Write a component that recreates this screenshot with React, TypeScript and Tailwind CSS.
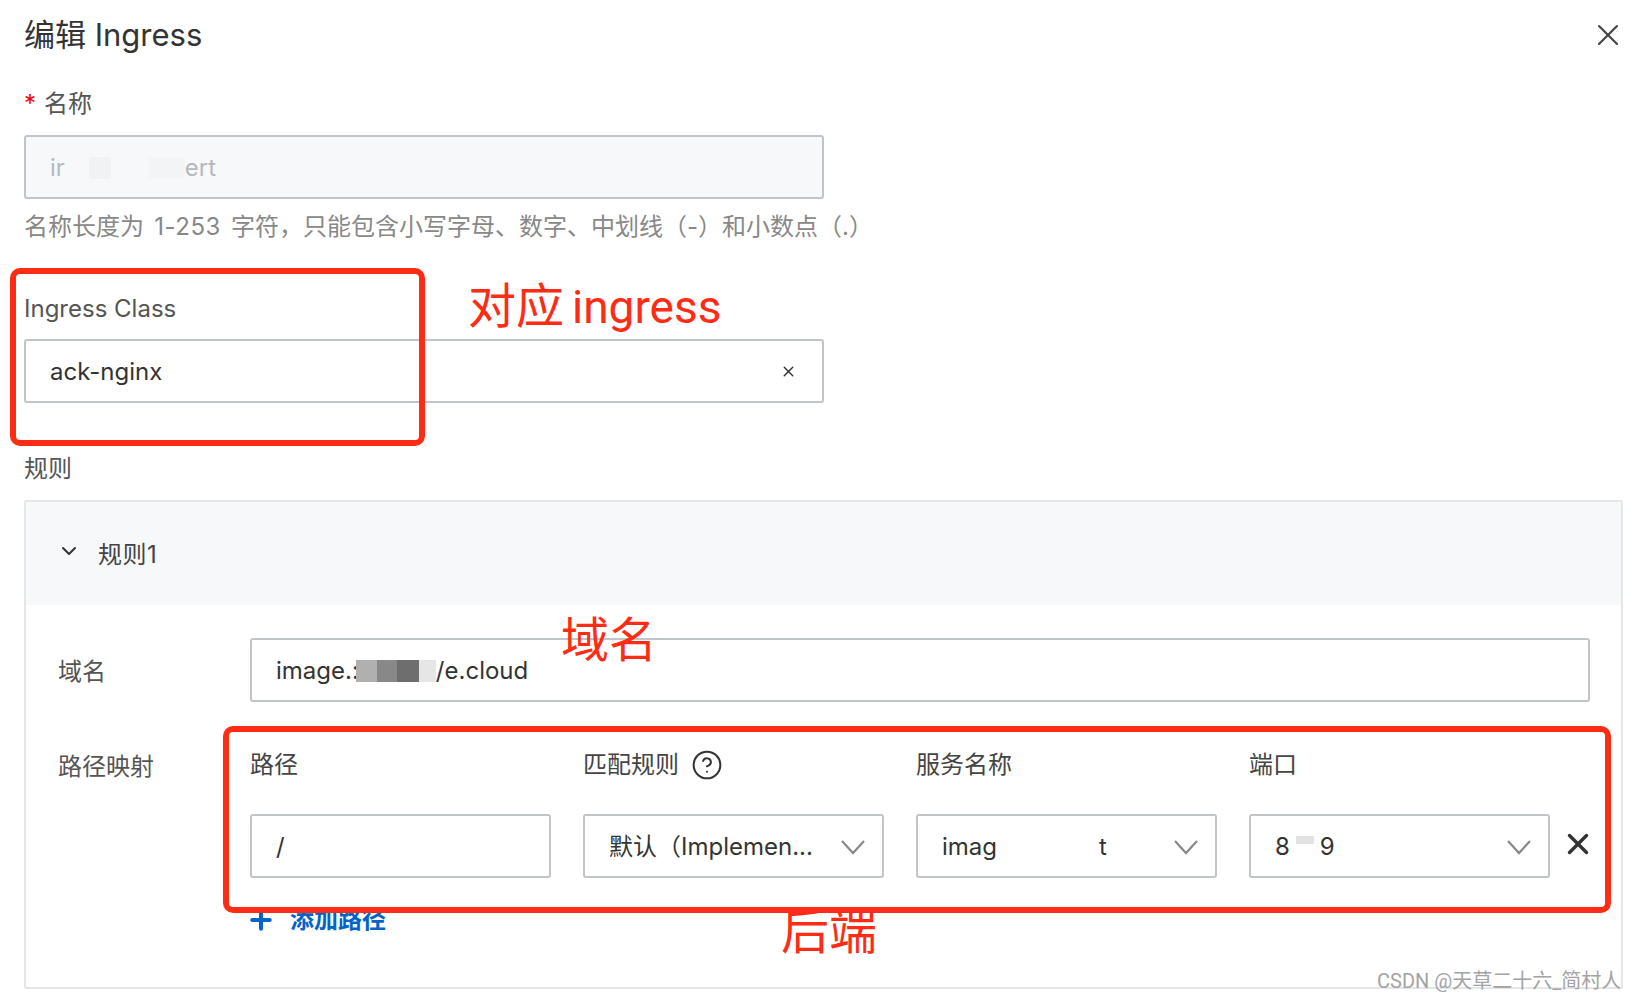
import { ChevronDown, CircleHelp, Plus, X } from 'lucide-react';

const inputBox = 'flex h-[64px] items-center rounded-[3px] border-2 border-[#c1c4c9] bg-white pl-[24px] pt-[2px] text-[24px] text-[#333]';

const SelectBox = ({ children }: { children: React.ReactNode }) => (
  <div className={`${inputBox} w-[301px] justify-between pr-[17px]`}>
    <div className="flex items-center whitespace-nowrap">{children}</div>
    <svg width="24" height="16" viewBox="0 0 24 16" fill="none" stroke="#888" strokeWidth="2.2" className="shrink-0">
      <path d="M1 2l11 12L23 2" />
    </svg>
  </div>
);

const ColLabel = ({ children }: { children: React.ReactNode }) => (
  <div className="flex h-[46px] w-[301px] items-center pt-[2px] text-[24px] text-[#444]">{children}</div>
);

const App = () => {
  return (
    <div className="relative h-[1000px] w-[1634px] overflow-hidden bg-white pl-[24px] font-['Inter','Noto_Sans_CJK_SC',sans-serif]">
      {/* header */}
      <div className="flex h-[70px] items-center justify-between pr-[8px]">
        <h1 className="text-[31px] text-[#333]">编辑 Ingress</h1>
        <X size={36} strokeWidth={1.4} className="text-[#444]" />
      </div>

      {/* name */}
      <div className="flex h-[65px] items-center pt-[2px] text-[24px] text-[#555]">
        <span className="mr-[8px] text-[#e00]">*</span>
        名称
      </div>
      <div className="flex h-[64px] w-[800px] items-center rounded-[3px] border-2 border-[#c1c4c9] bg-[#f7f8fa] pl-[24px] pt-[2px] text-[24px] text-[#b5b8bd]">
        ir
        <span className="ml-[24px] h-[22px] w-[22px] bg-[#f1f2f4]" />
        <span className="ml-[38px] h-[22px] w-[36px] bg-[#f3f4f6]" />
        ert
      </div>
      <p className="flex h-[54px] items-center pt-[1px] text-[24px] text-[#888]">
        名称长度为<span className="mx-[3px] whitespace-pre tracking-[0.5px]"> 1-253 </span>字符，只能包含小写字母、数字、中划线（-）和小数点（.）
      </p>

      {/* ingress class */}
      <div className="mt-[32px] flex h-[46px] items-center pt-[2px] text-[24px] text-[#555]">Ingress Class</div>
      <div className={`${inputBox} mt-[8px] w-[800px] justify-between pr-[25px]`}>
        ack-nginx
        <X size={17} strokeWidth={2} className="mt-[-2px] text-[#333]" />
      </div>

      {/* rules */}
      <div className="mt-[42px] flex h-[46px] items-center pt-[2px] text-[24px] text-[#555]">规则</div>
      <div className="mt-[9px] h-[489px] w-[1599px] rounded-[2px] border-2 border-[#e5e6e8]">
        <div className="flex h-[103px] items-center bg-[#f7f8fa] pl-[31px] pt-[2px] text-[24px] tracking-[0.5px] text-[#444]">
          <ChevronDown size={24} strokeWidth={2} className="mr-[17px] mt-[-8px] text-[#333]" />
          规则1
        </div>
        <div className="pl-[32px] pr-[31px] pt-[33px]">
          <div className="flex items-center">
            <div className="w-[192px] pt-[3px] text-[24px] text-[#555]">域名</div>
            <div className={`${inputBox} flex-1 whitespace-nowrap`}>
              image.:
              <span className="ml-[-3px] flex h-[22px]">
                <span className="h-full w-[21px] bg-[#b0b0b0]" />
                <span className="h-full w-[20px] bg-[#888]" />
                <span className="h-full w-[22px] bg-[#6e6e6e]" />
                <span className="h-full w-[17px] bg-[#e6e6e6]" />
              </span>
              /e.cloud
            </div>
          </div>
          <div className="mt-[39px] flex">
            <div className="flex h-[46px] w-[192px] items-center pt-[6px] text-[24px] text-[#555]">路径映射</div>
            <div>
              <div className="flex gap-[32px]">
                <ColLabel>路径</ColLabel>
                <ColLabel>
                  匹配规则
                  <CircleHelp size={32} strokeWidth={1.5} className="ml-[12px] text-[#333]" />
                </ColLabel>
                <ColLabel>服务名称</ColLabel>
                <ColLabel>端口</ColLabel>
              </div>
              <div className="mt-[27px] flex items-center gap-[32px]">
                <div className={`${inputBox} w-[301px]`}>/</div>
                <SelectBox>默认（Implemen...</SelectBox>
                <SelectBox>
                  imag
                  <span className="ml-[102px]">t</span>
                </SelectBox>
                <div className="relative">
                  <SelectBox>
                    8
                    <span className="ml-[6px] mr-[6px] mt-[-14px] h-[8px] w-[18px] bg-[#e2e2e2]" />
                    9
                  </SelectBox>
                  <X size={34} strokeWidth={2.4} className="absolute left-[312px] top-[13px] text-[#333]" />
                </div>
              </div>
              <div className="mt-[21px] flex h-[42px] items-center text-[24px] font-semibold text-[#0064c8]">
                <Plus size={30} strokeWidth={3.2} className="ml-[-4px] mr-[14px]" />
                添加路径
              </div>
            </div>
          </div>
        </div>
      </div>

      {/* annotations over the form */}
      <div className="absolute left-[10px] top-[268px] h-[178px] w-[415px] rounded-[10px] border-[6px] border-[#ff2c15]" />
      <div className="absolute left-[223px] top-[726px] h-[187px] w-[1388px] rounded-[10px] border-[6px] border-[#ff2c15]" />
      <div className="absolute left-[468px] top-[272px] flex items-baseline whitespace-nowrap font-['Roboto','Noto_Sans_CJK_SC',sans-serif] text-[48px] leading-[70px] text-[#ff2c15]">
        对应<span className="ml-[8px] text-[46px]">ingress</span>
      </div>
      <div className="absolute left-[561px] top-[605px] text-[48px] leading-[70px] text-[#ff2c15]">域名</div>
      <div className="absolute left-[781px] top-[897px] text-[48px] leading-[70px] text-[#ff2c15]">后端</div>
      <div className="absolute left-[1377px] top-[966px] font-['Roboto','Noto_Sans_CJK_SC',sans-serif] text-[20px] leading-[30px] text-[#a3a3a3]">CSDN @天草二十六_简村人</div>
    </div>
  );
};

export default App;
